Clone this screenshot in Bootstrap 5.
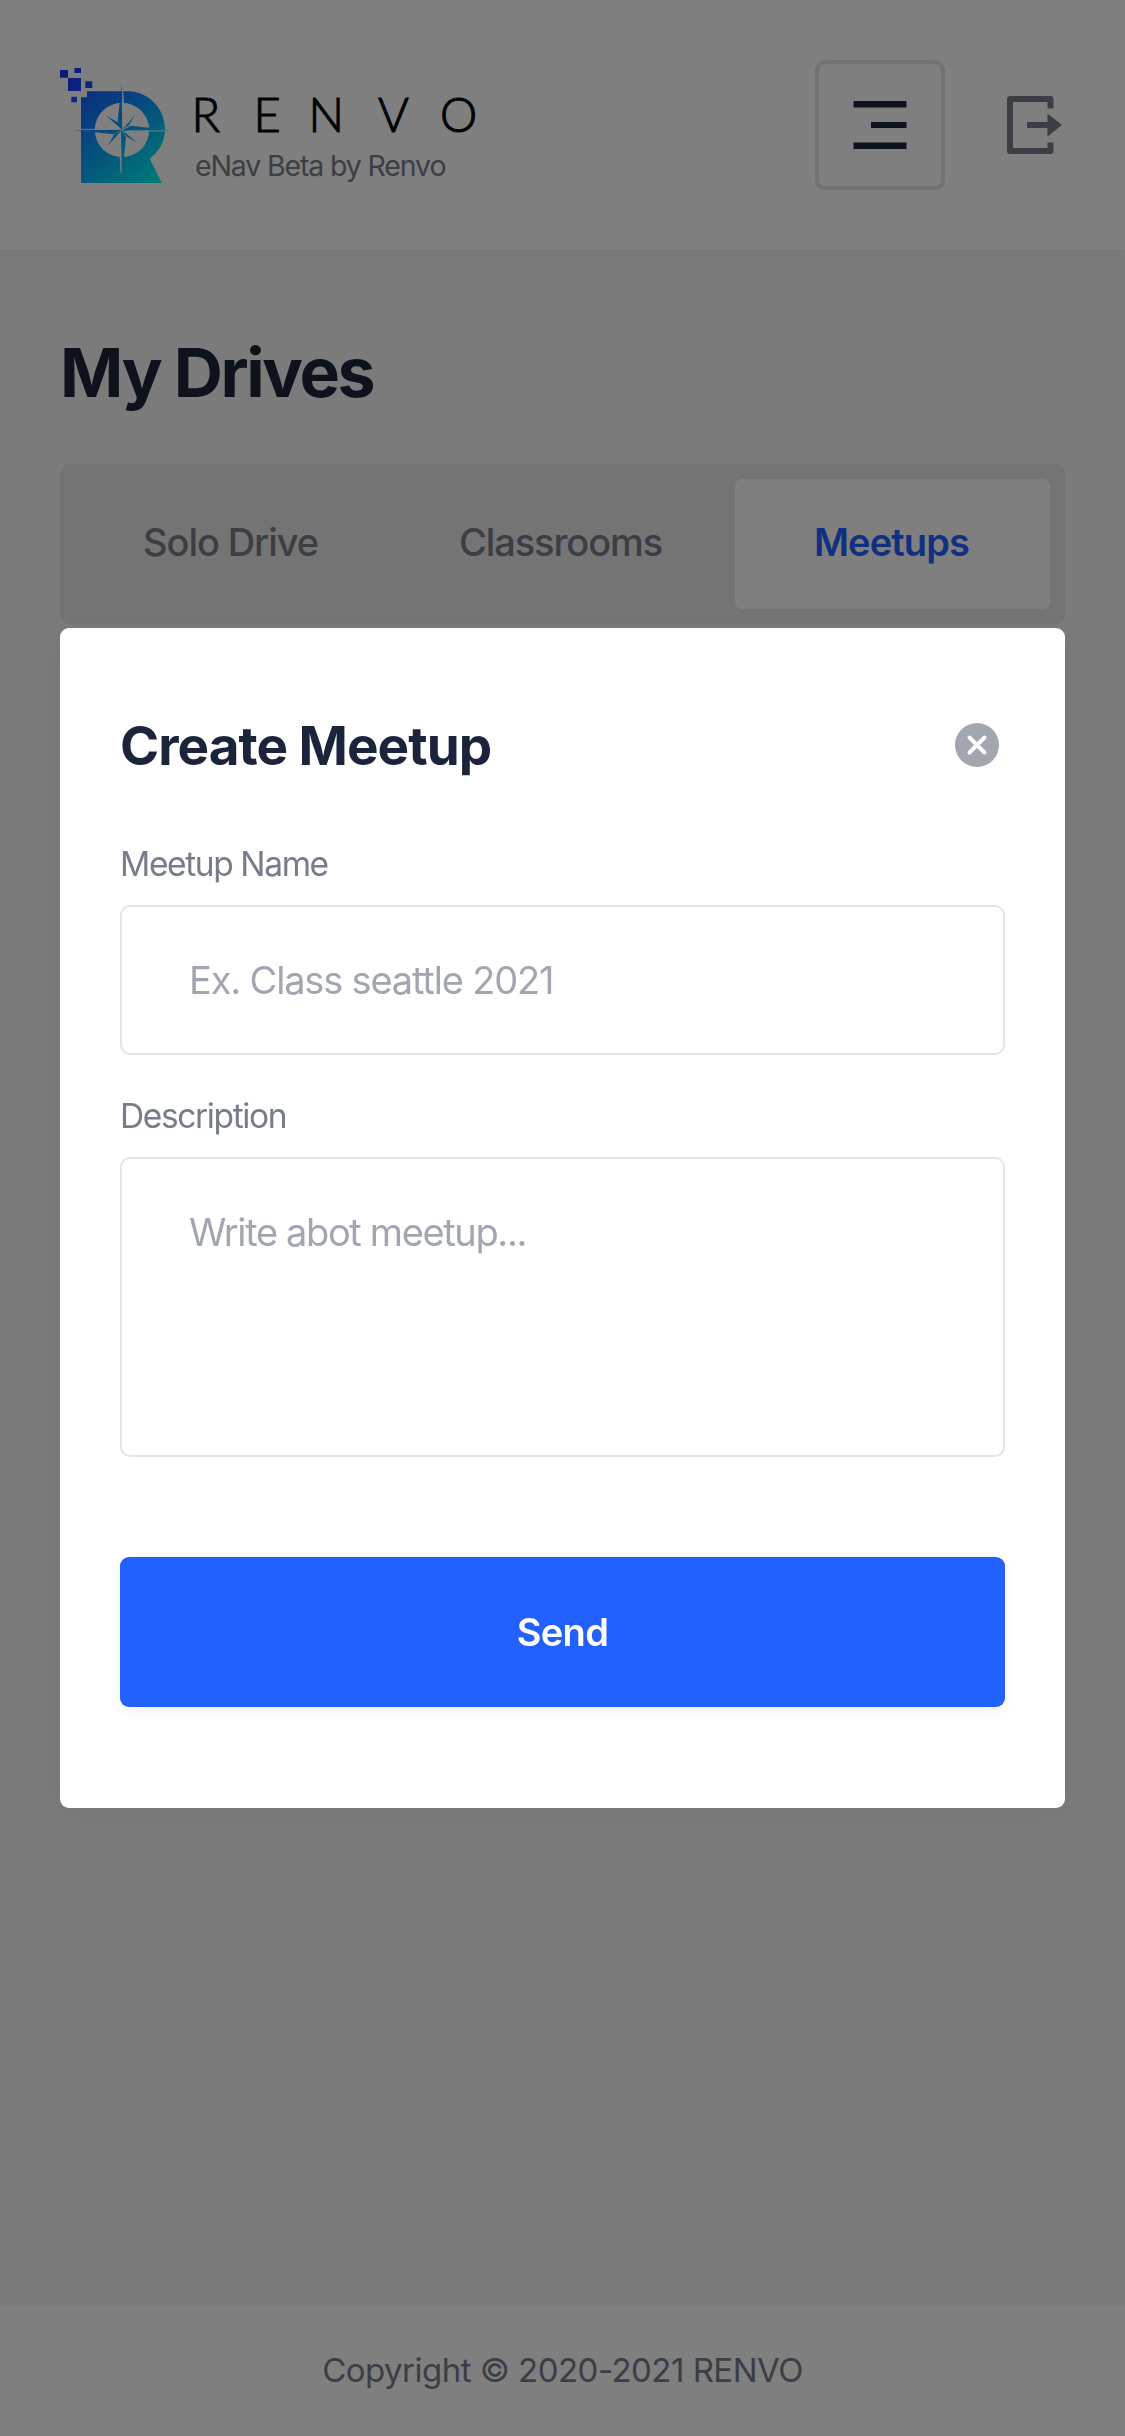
<!DOCTYPE html>
<html lang="en">
<head>
<meta charset="utf-8">
<meta name="viewport" content="width=device-width, initial-scale=1">
<title>RENVO – My Drives</title>
<link href="https://cdn.jsdelivr.net/npm/bootstrap@5.3.0/dist/css/bootstrap.min.css" rel="stylesheet">
<style>
  :root { --ink: #1b243b; --muted: #777c8b; --brand: #2361ff; }
  body { font-family: Inter, "Liberation Sans", sans-serif; color: var(--ink); background: #f6f6f9; overflow: hidden; }
  .app-header { height: 250px; padding: 0 60px; box-shadow: 0 1px 3px rgba(0,0,0,.04); }
  .brand-mark { width: 110px; height: 120px; }
  .brand-text { margin-left: 25px; padding-top: 19px; }
  .brand-word { width: 290px; height: 60px; display: block; overflow: visible; font: 300 47px Lato, sans-serif; fill: #03060f; stroke: #03060f; stroke-width: 1.1px; }
  .brand-sub { font-size: 28.5px; letter-spacing: -1.14px; line-height: 34px; margin-top: 5px; color: var(--muted); }
  .menu-btn { width: 130px; height: 130px; border: 4px solid #e5e5e5; border-radius: 10px; }
  .exit-btn { margin-left: 61px; width: 59px; height: 60px; }
  .page-title { font-size: 68px; font-weight: 700; letter-spacing: -2.41px; line-height: 80px; margin: 0 0 52px; }
  .app-main { padding: 82px 60px 0; }
  .drive-tabs { height: 160px; padding: 15px; border-radius: 10px; background: #e8e8ea; }
  .drive-tabs .nav-link { height: 130px; padding: 0 4px 4px 0; font-size: 38px; font-weight: 500; letter-spacing: -1.1px; color: var(--muted); border-radius: 7px; width: 315px; }
  .drive-tabs .nav-link.active { background: #fff; color: var(--brand); font-weight: 600; letter-spacing: -.87px; padding-right: 2px; }
  .app-footer { height: 130px; font-size: 33px; letter-spacing: -.52px; color: var(--muted); }
  .modal-backdrop { --bs-backdrop-opacity: .5; }
  .meetup-modal .modal-dialog { max-width: none; margin: 0 60px; min-height: 100%; }
  .meetup-modal .modal-content { height: 1180px; border: 0; border-radius: 9px; box-shadow: 0 4px 30px rgba(0,0,0,.06); padding: 82px 60px 0; }
  .meetup-modal .modal-header { padding: 0 5px 0 0; border: 0; height: 70px; margin-bottom: 64px; }
  .meetup-modal .modal-title { font-size: 53px; font-weight: 700; letter-spacing: -.97px; line-height: 70px; padding-top: 1px; }
  .close-btn { width: 46px; height: 46px; }
  .meetup-modal .form-label { display: block; font-size: 33.5px; letter-spacing: -1.38px; line-height: 40px; color: var(--muted); margin: 0 0 21px; }
  .meetup-modal .form-control { border: 2px solid #e5e5e5; border-radius: 10px; padding: 0 67px; font-size: 38px; line-height: 46px; letter-spacing: -1.17px; height: 150px; }
  .meetup-modal input.form-control { margin-bottom: 41px; }
  .meetup-modal textarea.form-control { height: 300px; padding-top: 50px; resize: none; letter-spacing: -1.36px; }
  .meetup-modal .form-control::placeholder { color: #a2a6b1; }
  .send-btn { height: 150px; margin-top: 100px; border-radius: 9px; border: 0; background: var(--brand); font-size: 38px; font-weight: 600; letter-spacing: -.6px; box-shadow: 0 5px 14px rgba(0,0,0,.05); }
</style>
</head>
<body>
<div class="d-flex flex-column vh-100">
  <header class="app-header bg-white d-flex align-items-center">
    <a class="d-flex align-items-start text-decoration-none me-auto" href="#" aria-label="Renvo">
      <svg class="brand-mark" viewBox="60 45 330 360">
        <defs>
          <linearGradient id="rg" gradientUnits="userSpaceOnUse" x1="120" y1="120" x2="350" y2="400">
            <stop offset="0" stop-color="#1858ff"/><stop offset=".5" stop-color="#08a4fa"/><stop offset="1" stop-color="#00f6ec"/>
          </linearGradient>
          <linearGradient id="sg" gradientUnits="userSpaceOnUse" x1="60" y1="60" x2="160" y2="150">
            <stop offset="0" stop-color="#1434f4"/><stop offset="1" stop-color="#1858ff"/>
          </linearGradient>
        </defs>
        <g fill="url(#sg)">
          <path d="M60 60h24v23H60zM103 54h20v15h-20zM84 84h39v39H84zM136 94h21v20h-21zM94 140h17v17H94z"/>
        </g>
        <path fill="url(#rg)" d="M141 124H262C326 124 375 176 375 238C375 274 358 304 329 326L366 399H123V142H141z"/>
        <circle cx="246" cy="240" r="81.500" fill="#fff"/>
        <path fill="#fff" d="M247 100L252 160H247zM386 241L326 234V241zM104 241L165 247V241zM245 382L239 320H245z"/>
        <g fill="url(#rg)">
          <path d="M244 98L247 240L233 214L239 158L241 157z"/>
          <path d="M388 241L246 242L272 227L328 233z"/>
          <path d="M245 382L243 240L258 262L252 322z"/>
          <path d="M104 241L246 239L221 253L164 247z"/>
          <path d="M199 197L241 221L247 240zM287 193L266 226L246 241zM293 280L258 259L246 240zM204 286L223 253L246 240z"/>
        </g>
        <path stroke="#fff" stroke-width="2.500" fill="none" d="M248 112V230M374 243L262 243M242 368V252M116 238H232"/>
      </svg>
      <div class="brand-text">
        <svg class="brand-word" viewBox="0 0 290 60">
          <text y="47.500"><tspan x="-3.500">R</tspan><tspan x="58.500">E</tspan><tspan x="113.500">N</tspan><tspan x="183">V</tspan><tspan x="245">O</tspan></text>
        </svg>
        <div class="brand-sub">eNav Beta by Renvo</div>
      </div>
    </a>
    <button class="menu-btn btn p-0 d-flex align-items-center justify-content-center" aria-label="Menu">
      <svg width="54" height="48" viewBox="0 0 54 48" fill="#1b243b"><path d="M0.500 0H53.500v6.500H0.500zM18 21h35.500v6H18zM0.500 41.500H53.500V48H0.500z"/></svg>
    </button>
    <a class="exit-btn" href="#" aria-label="Log out">
      <svg width="59" height="60" viewBox="0 0 59 60" class="d-block"><path fill="none" stroke="#777c8b" stroke-width="6" stroke-linejoin="round" d="M44.500 13.500V4H4v52h40.500V47.500"/><path fill="#777c8b" d="M21 27h20.500v-8.500L56 30L41.500 41.500V33H21z"/></svg>
    </a>
  </header>

  <main class="app-main flex-grow-1">
    <h1 class="page-title">My Drives</h1>
    <nav class="drive-tabs nav nav-pills flex-nowrap justify-content-between">
      <a class="nav-link d-flex align-items-center justify-content-center" href="#">Solo Drive</a>
      <a class="nav-link d-flex align-items-center justify-content-center" href="#">Classrooms</a>
      <a class="nav-link active d-flex align-items-center justify-content-center" href="#">Meetups</a>
    </nav>
  </main>

  <footer class="app-footer bg-white d-flex align-items-center justify-content-center">Copyright © 2020-2021 RENVO</footer>
</div>

<div class="modal-backdrop show"></div>
<div class="modal meetup-modal d-block" tabindex="-1">
  <div class="modal-dialog modal-dialog-centered">
    <form class="modal-content">
      <div class="modal-header">
        <h2 class="modal-title">Create Meetup</h2>
        <button type="button" class="close-btn btn p-0 border-0 d-flex" aria-label="Close">
          <svg width="46" height="46" viewBox="0 0 46 46"><circle cx="23" cy="23" r="22" fill="#a2a6b1"/><path d="M15.500 15.500l15 15m0-15l-15 15" stroke="#fff" stroke-width="4" stroke-linecap="round"/></svg>
        </button>
      </div>
      <div class="modal-body p-0 flex-grow-0">
        <label class="form-label" for="mname">Meetup Name</label>
        <input class="form-control" id="mname" placeholder="Ex. Class seattle 2021">
        <label class="form-label" for="mdesc">Description</label>
        <textarea class="form-control" id="mdesc" placeholder="Write abot meetup..."></textarea>
        <button type="button" class="send-btn btn btn-primary w-100">Send</button>
      </div>
    </form>
  </div>
</div>
<script src="https://cdn.jsdelivr.net/npm/bootstrap@5.3.0/dist/js/bootstrap.bundle.min.js"></script>
</body>
</html>
